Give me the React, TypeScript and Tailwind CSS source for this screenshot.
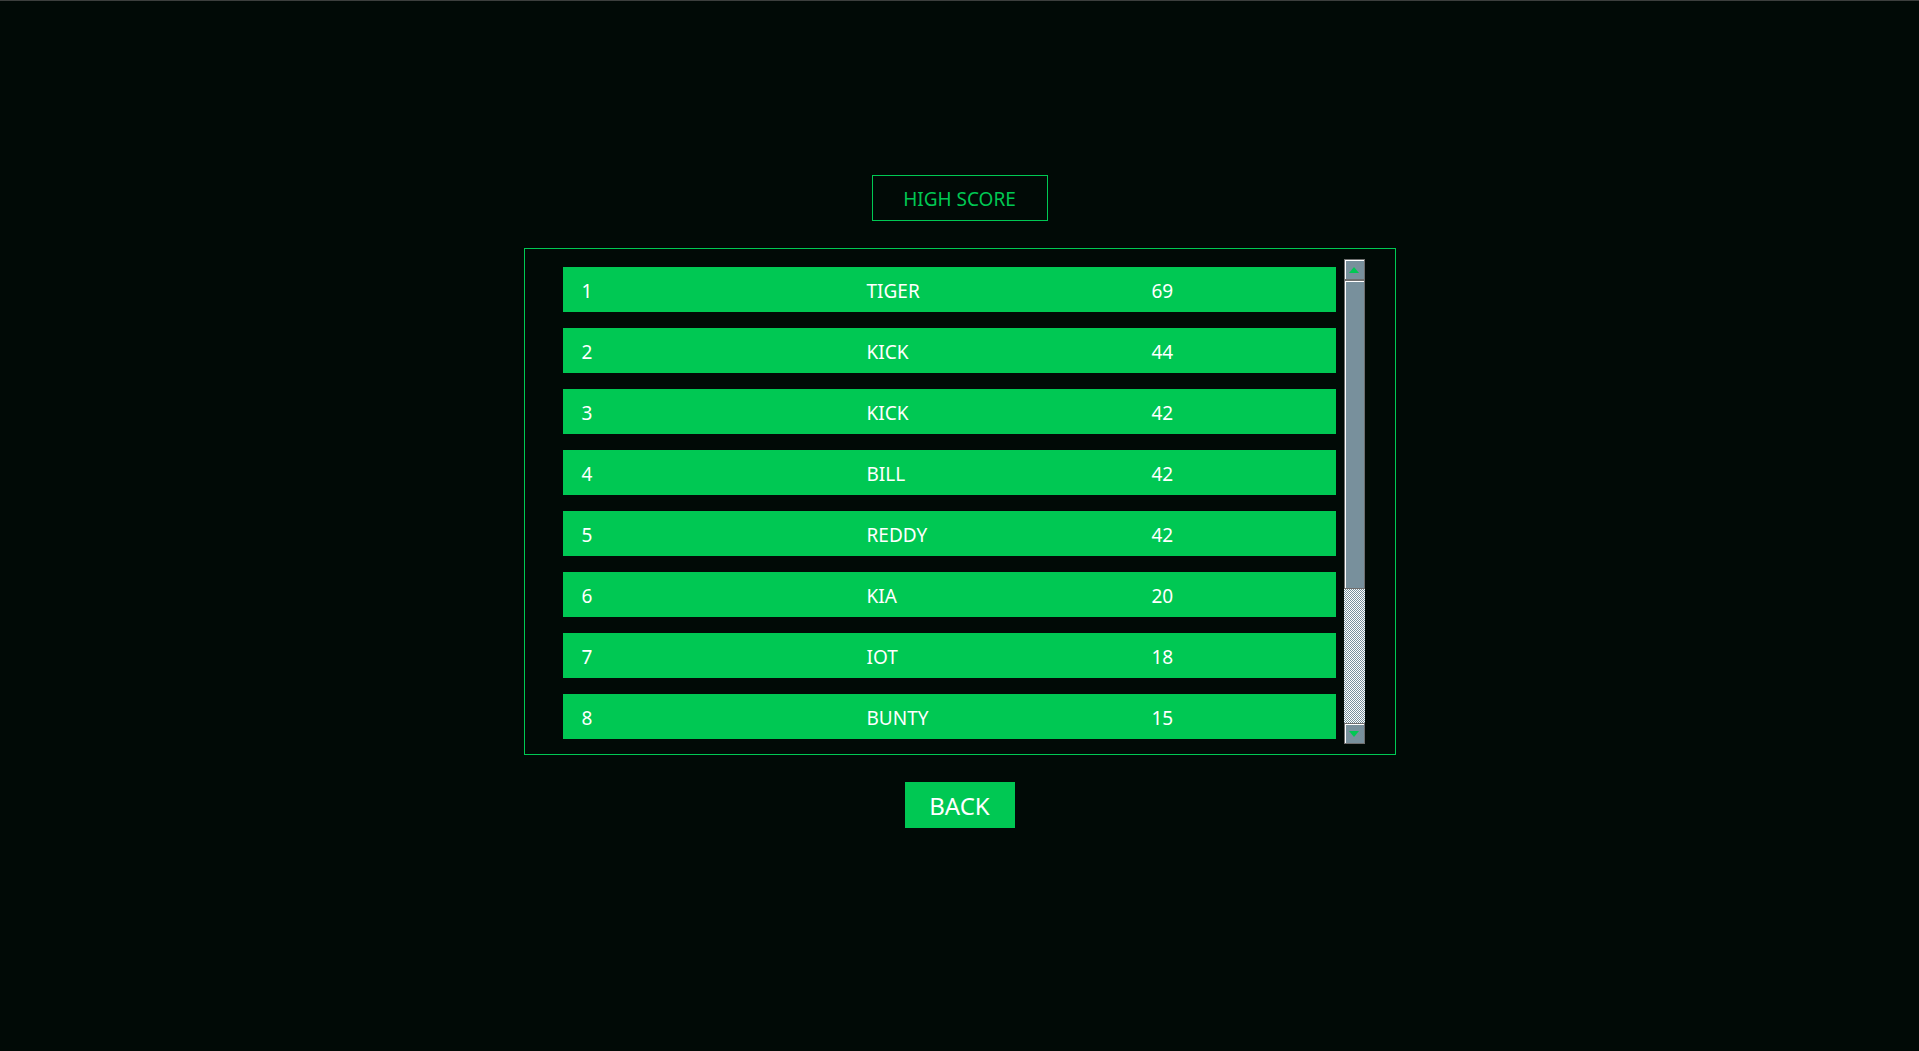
import React from "react";

const scores: [number, string, number][] = [
  [1, "TIGER", 69],
  [2, "KICK", 44],
  [3, "KICK", 42],
  [4, "BILL", 42],
  [5, "REDDY", 42],
  [6, "KIA", 20],
  [7, "IOT", 18],
  [8, "BUNTY", 15],
];

function ScrollButton({ dir }: { dir: "up" | "down" }) {
  return (
    <div className="h-[21px] w-[21px] border border-[#6e6e6e] bg-[#78909c] flex items-center justify-center shadow-[inset_1px_1px_0_#ffffff]">
      <svg width="10" height="6" viewBox="0 0 10 6">
        {dir === "up" ? (
          <polygon points="0,6 10,6 5,0" fill="#00c853" />
        ) : (
          <polygon points="0,0 10,0 5,6" fill="#00c853" />
        )}
      </svg>
    </div>
  );
}

export default function App() {
  return (
    <div
      className="min-h-[1051px] w-full bg-[#010a06] flex flex-col"
      style={{ fontFamily: '"Noto Sans", "DejaVu Sans", sans-serif' }}
    >
      <div className="h-px w-full bg-[#3c3f3d]" />
      <div className="flex flex-col items-center pt-[174px]">
        <div className="w-[176px] h-[46px] border border-[#00c853] flex items-center justify-center pt-[2px] text-[#00c853] text-[19px] leading-none">
          HIGH SCORE
        </div>
        <div className="mt-[27px] w-[872px] h-[507px] border border-[#00c853] pt-[10px] pl-[38px] pr-[30px] flex gap-[8px]">
          <div className="w-[773px] h-[485px] overflow-hidden pt-[8px] flex flex-col gap-[16px]">
            {scores.map(([rank, name, score]) => (
              <div
                key={rank}
                className="shrink-0 h-[45px] bg-[#00c853] flex items-center pl-[19px] pt-[3px] text-white text-[19px] leading-none"
              >
                <span className="w-[285px]">{rank}</span>
                <span className="w-[285px]">{name}</span>
                <span>{score}</span>
              </div>
            ))}
          </div>
          <div className="w-[21px] h-[485px] flex flex-col">
            <ScrollButton dir="up" />
            <div className="h-[309px] border border-[#6e6e6e] bg-[#78909c] shadow-[inset_1px_1px_0_#ffffff]" />
            <div className="flex-1 bg-[repeating-conic-gradient(#78909c_0_25%,#ffffff_0_50%)] bg-[length:2px_2px]" />
            <ScrollButton dir="down" />
          </div>
        </div>
        <button className="mt-[27px] w-[110px] h-[46px] bg-[#00c853] text-white text-[24px] leading-none flex items-center justify-center pt-[2px]">
          BACK
        </button>
      </div>
    </div>
  );
}
